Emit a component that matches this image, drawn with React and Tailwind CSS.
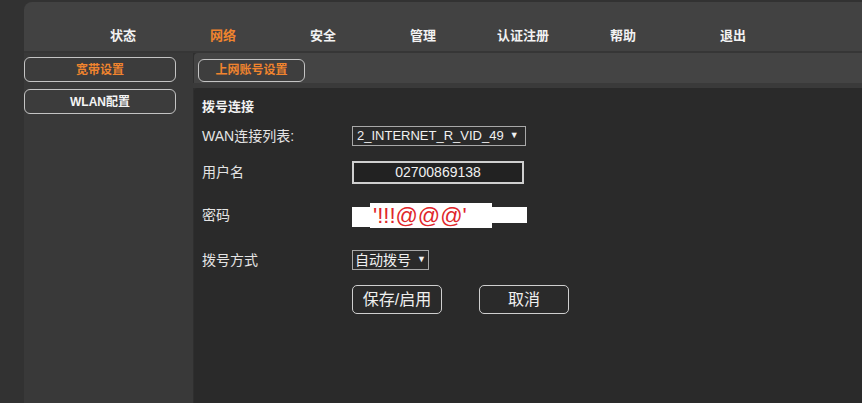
import React from "react";

const navItems = [
  { label: "状态", w: "w-[100px]" },
  { label: "网络", w: "w-[100px]", active: true },
  { label: "安全", w: "w-[100px]" },
  { label: "管理", w: "w-[100px]" },
  { label: "认证注册", w: "w-[100px]" },
  { label: "帮助", w: "w-[100px]" },
  { label: "退出", w: "w-[120px]" },
];

const font = "font-['Liberation_Sans','Noto_Sans_CJK_SC',sans-serif]";

const App = () => {
  return (
    <div
      className={`w-[862px] h-[403px] overflow-hidden bg-[#323232] pt-[2px] pl-[24px] flex flex-col ${font}`}
    >
      {/* top nav */}
      <nav className="h-[49px] shrink-0 bg-[#424242] rounded-tl-[8px] flex items-center pt-[19px] pl-[49px]">
        {navItems.map((item) => (
          <div
            key={item.label}
            className={`${item.w} text-center text-[13px] font-bold ${
              item.active ? "text-[#f0842e]" : "text-[#f2f2f2]"
            }`}
          >
            {item.label}
          </div>
        ))}
      </nav>
      <div className="h-[2px] shrink-0 bg-[#363636]" />

      <div className="flex flex-1 min-h-0">
        {/* sidebar */}
        <aside className="w-[169px] shrink-0 bg-[#393939] pt-[4px] flex flex-col gap-[7px]">
          <button className="w-[152px] h-[25px] rounded-[6px] border border-[#c4c4c4] bg-[#3c3c3c] text-[12px] font-bold text-[#f0842e]">
            宽带设置
          </button>
          <button className="w-[152px] h-[25px] rounded-[6px] border border-[#c4c4c4] bg-[#3c3c3c] text-[12px] font-bold text-[#f4f4f4]">
            WLAN配置
          </button>
        </aside>

        <div className="flex-1 flex flex-col min-w-0 bg-[#2f2f2f]">
          {/* sub tabs */}
          <div className="h-[30px] shrink-0 bg-[#444444] rounded-tl-[4px] pl-[4px] pt-[4px] ml-[1px]">
            <button className="w-[107px] h-[23px] rounded-[6px] border border-[#c4c4c4] bg-[#3e3e3e] text-[12px] font-bold text-[#f0842e]">
              上网账号设置
            </button>
          </div>
          <div className="h-[5px] shrink-0 bg-[#3a3a3a]" />

          {/* content */}
          <div className="flex-1 bg-[#2a2a2a] rounded-tl-[4px] ml-[1px] pl-[8px] pt-[10px] flex flex-col">
            <div className="h-[18px] flex items-center text-[13px] font-bold text-[#f2f2f2]">
              拨号连接
            </div>

            <div className="mt-[10px] h-[20px] flex items-center">
              <div className="w-[150px] text-[14px] text-[#e4e4e4]">WAN连接列表:</div>
              <div className="h-[20px] w-[174px] border border-[#a8a8a8] flex items-center pl-[4px] text-[13px] text-[#f0f0f0]">
                <span>2_INTERNET_R_VID_49</span>
                <span className="ml-[6px] text-[9px]">▼</span>
              </div>
            </div>

            <div className="mt-[15px] h-[23px] flex items-center">
              <div className="w-[150px] text-[14px] text-[#e4e4e4]">用户名</div>
              <div className="h-[23px] w-[172px] border-2 border-[#cfcfcf] bg-[#222222] flex items-center justify-center text-[14px] text-[#f0f0f0]">
                02700869138
              </div>
            </div>

            <div className="mt-[19px] h-[25px] flex items-center">
              <div className="w-[150px] text-[14px] text-[#e4e4e4]">密码</div>
              <div className="flex items-center">
                <div className="w-[18px] h-[20px] bg-white mt-[2px]" />
                <div className="w-[122px] h-[25px] bg-white pl-[3px] flex items-center text-[22px] leading-none text-[#e0262a] font-['Liberation_Sans',sans-serif]">
                  '!!!@@@'
                </div>
                <div className="w-[35px] h-[16px] bg-white mt-[-2px]" />
              </div>
            </div>

            <div className="mt-[22px] h-[20px] flex items-center">
              <div className="w-[150px] text-[14px] text-[#e4e4e4]">拨号方式</div>
              <div className="h-[20px] w-[77px] border border-[#a8a8a8] flex items-center pl-[2px] text-[14px] text-[#f0f0f0]">
                <span>自动拨号</span>
                <span className="ml-[6px] text-[9px]">▼</span>
              </div>
            </div>

            <div className="mt-[15px] h-[29px] flex items-center pl-[150px] gap-[37px]">
              <button className="w-[90px] h-[29px] rounded-[5px] border border-[#cfcfcf] text-[16px] text-[#f0f0f0]">
                保存/启用
              </button>
              <button className="w-[90px] h-[29px] rounded-[5px] border border-[#cfcfcf] text-[16px] text-[#f0f0f0]">
                取消
              </button>
            </div>
          </div>
        </div>
      </div>
    </div>
  );
};

export default App;
